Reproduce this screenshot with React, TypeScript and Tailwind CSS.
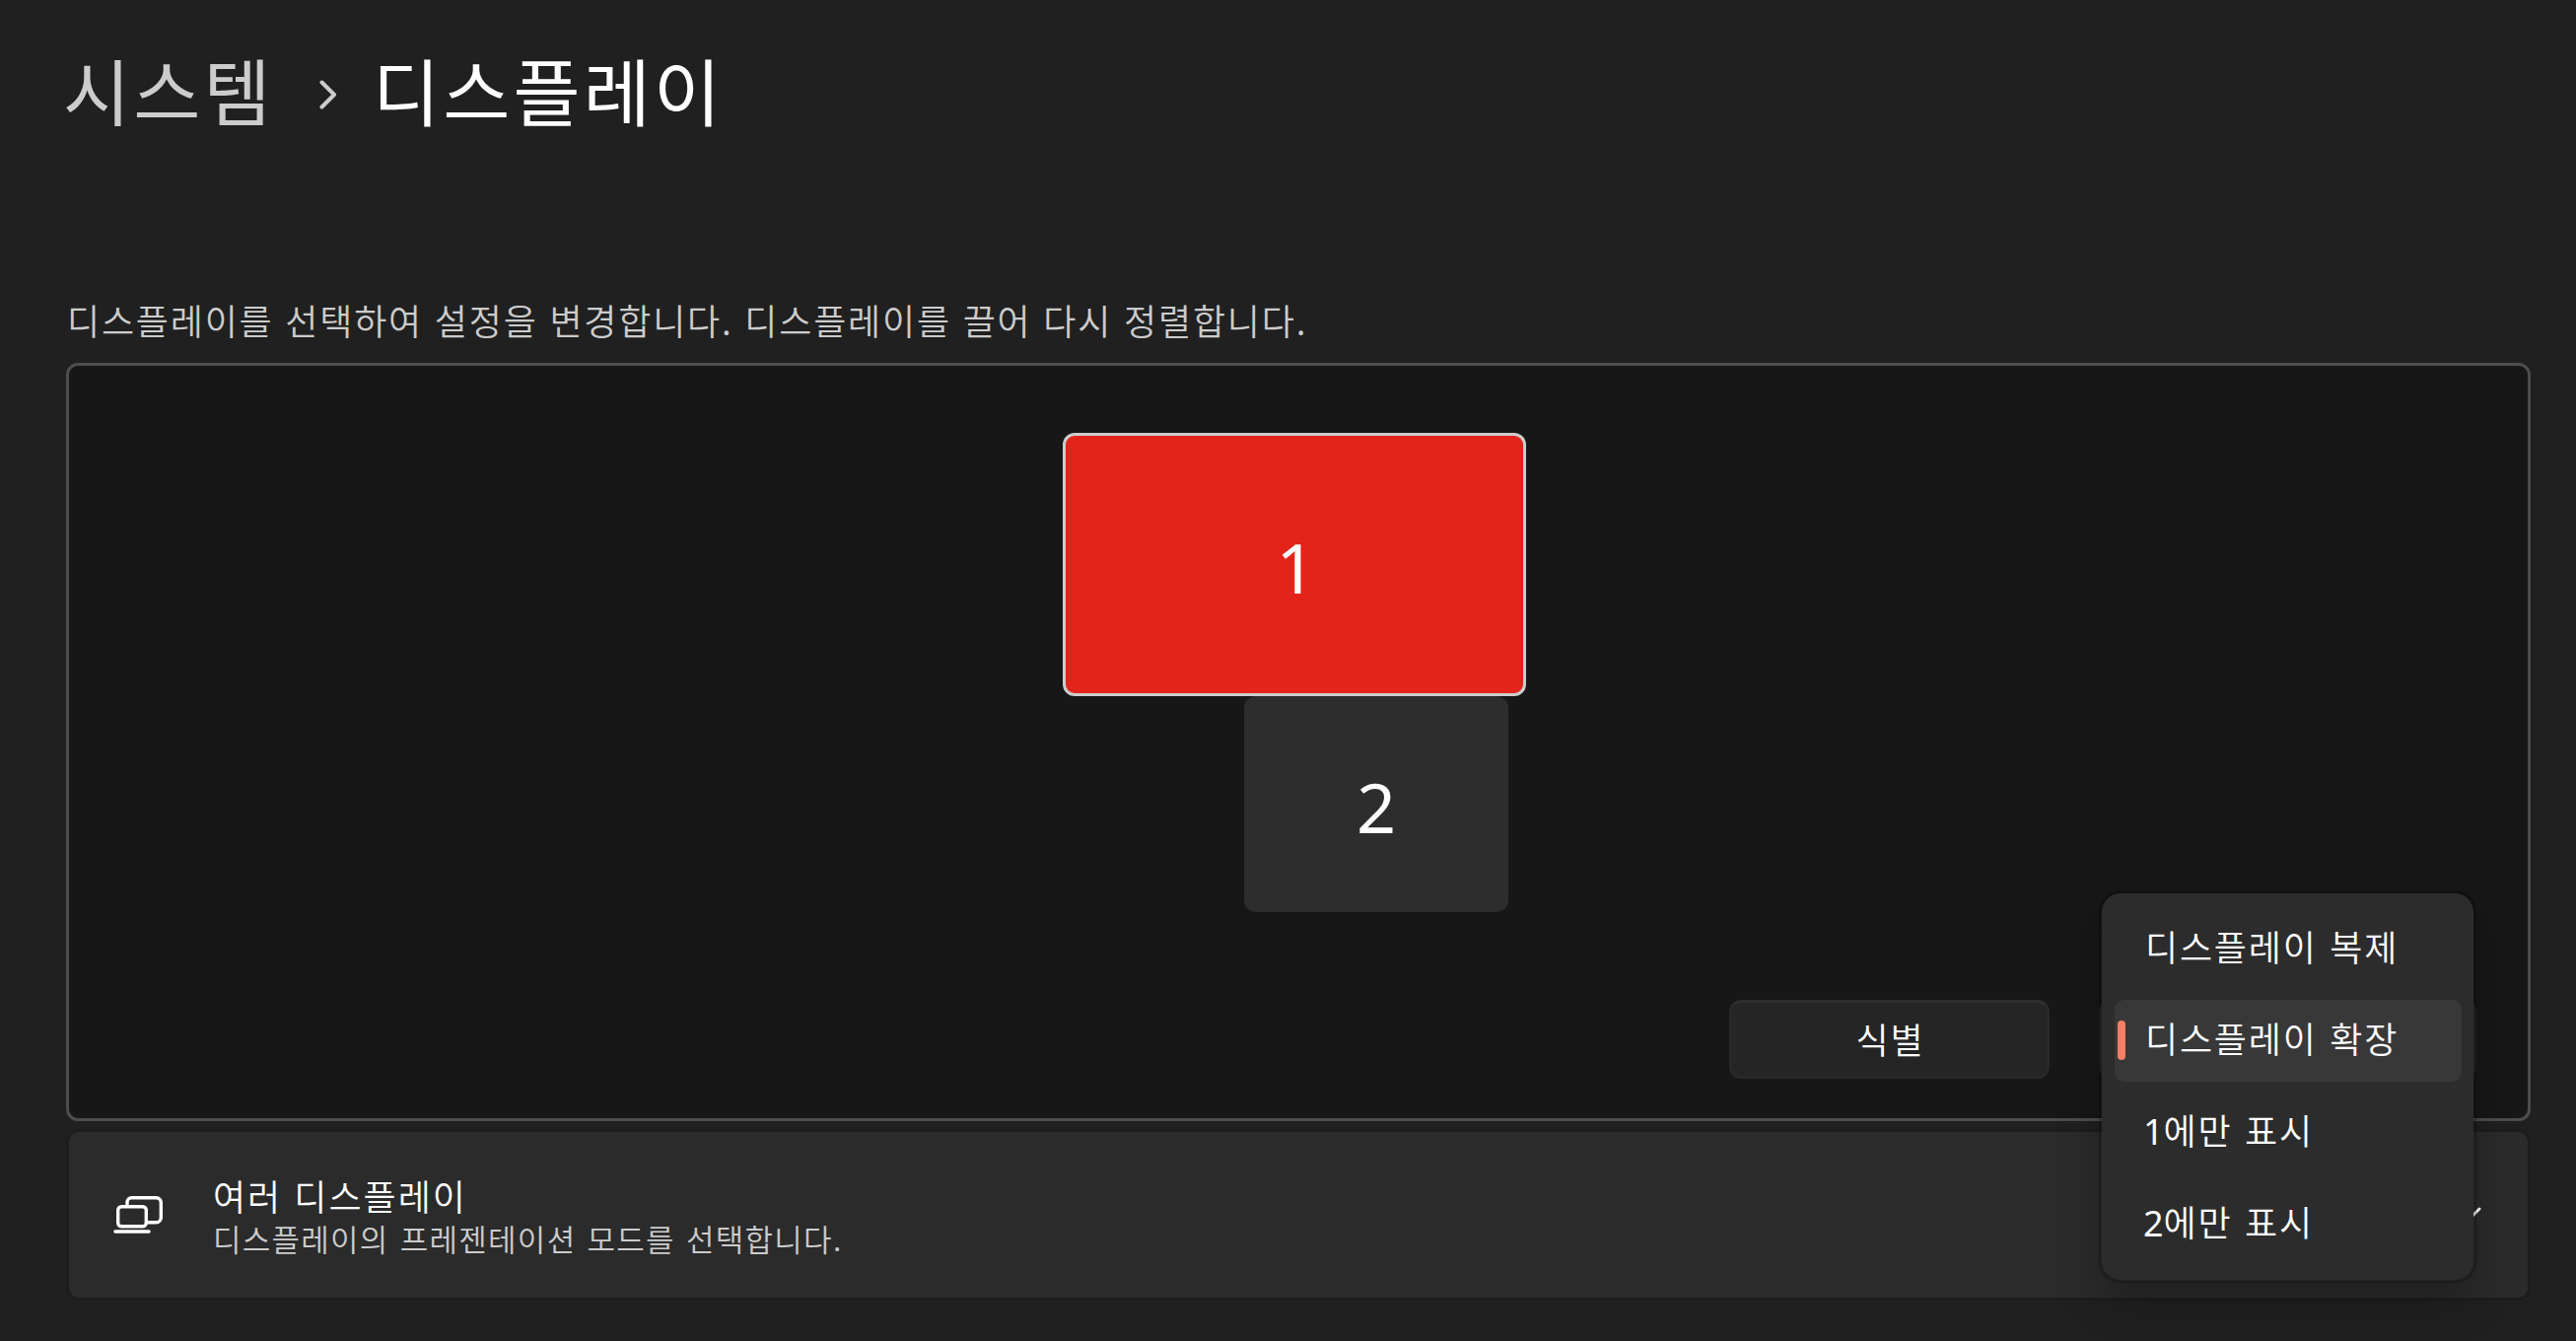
import React from "react";

const modes = ["디스플레이 복제", "디스플레이 확장", "1에만 표시", "2에만 표시"];
const selectedMode = 1;

function MultiDisplayIcon() {
  return (
    <svg width="50" height="38" viewBox="0 0 50 38" fill="none" stroke="#fff" strokeWidth="3.4" strokeLinecap="round">
      <rect x="4.7" y="10.7" width="28.6" height="20" rx="3.5" />
      <path d="M14 9.5V6a4.5 4.5 0 0 1 4.5-4.3h25A4.8 4.8 0 0 1 48.300 6.500v15.500a4.800 4.800 0 0 1-4.800 4.800H34.500" />
      <path d="M1.900 36h34.200" />
    </svg>
  );
}

export default function App() {
  return (
    <div className="relative flex h-[1360px] w-[2613px] flex-col overflow-hidden bg-[#202020] pr-[46px] pl-[67px] font-['Noto_Sans','Noto_Sans_CJK_KR',sans-serif] text-white">
      <header className="mt-[40px] flex h-[110px] items-center font-['Noto_Sans_CJK_KR',sans-serif] text-[74px] leading-[110px] font-normal tracking-[3.2px] whitespace-nowrap">
        <span className="-mt-[11px] -ml-[3px] w-[260px] text-[#cccccc]">시스템</span>
        <svg className="mt-[2px] mr-[36px]" width="18" height="30" viewBox="0 0 18 30" fill="none" stroke="#cccccc" strokeWidth="4" strokeLinecap="round" strokeLinejoin="round">
          <path d="M2.500 2.500L15 15L2.500 27.500" />
        </svg>
        <h1 className="-mt-[11px]">디스플레이</h1>
      </header>

      <p className="mt-[146px] h-[72px] pl-px font-['Noto_Sans_CJK_KR',sans-serif] text-[36px] leading-[56px] font-[350] tracking-[1.8px] whitespace-nowrap text-[#cccccc] [word-spacing:2px]">
        디스플레이를 선택하여 설정을 변경합니다. 디스플레이를 끌어 다시 정렬합니다.
      </p>

      <section className="relative flex h-[769px] shrink-0 flex-col justify-end rounded-[12px] border-[3px] border-[#4d4d4d] bg-[#171717]">
        <div className="absolute top-[68px] left-[1008px] z-10 flex h-[267px] w-[470px] items-center justify-center rounded-[12px] border-[3px] border-[#cccccc] bg-[#e3241b] pt-[6px] pl-[3px] text-[70px]">
          1
        </div>
        <div className="absolute top-[335px] left-[1192px] flex h-[219px] w-[268px] items-center justify-center rounded-[12px] bg-[#2d2d2d] pt-[6px] text-[70px]">
          2
        </div>
        <div className="mr-[52px] mb-[40px] flex justify-end gap-[50px]">
          <button className="h-[80px] w-[325px] rounded-[12px] border-[3px] border-[#292929] border-t-[#2e2e2e] bg-[#252525] pb-[3px] pl-[2px] font-['Noto_Sans_CJK_KR',sans-serif] text-[36px] font-[350] tracking-[1.8px]">식별</button>
          <button className="h-[80px] w-[383px] rounded-[12px] border-[3px] border-[#292929] bg-[#252525]" />
        </div>
      </section>

      <section className="mt-[8px] flex h-[174px] shrink-0 items-center rounded-[12px] border-[3px] border-[#1d1d1d] bg-[#2b2b2b] bg-clip-padding pl-[45px]">
        <MultiDisplayIcon />
        <div className="ml-[51px] flex-1 pt-[4px] font-['Noto_Sans_CJK_KR',sans-serif] font-[350] whitespace-nowrap">
          <h2 className="h-[44px] text-[36px] leading-[44px] font-[350] tracking-[2px] [word-spacing:2px]">여러 디스플레이</h2>
          <p className="h-[44px] text-[31px] leading-[44px] tracking-[1.25px] text-[#cccccc] [word-spacing:3px]">디스플레이의 프레젠테이션 모드를 선택합니다.</p>
        </div>
        <svg className="mt-[4px] mr-[47px]" width="34" height="20" viewBox="0 0 34 20" fill="none" stroke="#fff" strokeWidth="3" strokeLinecap="round" strokeLinejoin="round">
          <path d="M2 2L17 17L32 2" />
        </svg>
      </section>

      <ul className="absolute top-[903px] left-[2129px] z-20 flex w-[383px] flex-col gap-[10px] rounded-[22px] border-[3px] border-black/25 bg-[#2c2c2c] bg-clip-padding pr-[12px] pl-[13px] py-[15px] shadow-[0_20px_40px_rgba(0,0,0,0.26)]">
        {modes.map((mode, i) => (
          <li
            key={mode}
            className={
              i === selectedMode
                ? "flex h-[83px] items-center rounded-[10px] bg-[#383838] pl-[3px] text-[36px] font-[350] tracking-[1.8px] whitespace-nowrap [word-spacing:1.5px]"
                : "flex h-[83px] items-center pl-[3px] text-[36px] font-[350] tracking-[1.8px] whitespace-nowrap [word-spacing:1.5px]"
            }
          >
            <span className={i === selectedMode ? "-mt-px mr-[20px] h-[40px] w-[8px] rounded-full bg-[#f67f66]" : "mr-[20px] w-[8px]"} />
            <span className={i > 1 ? "-mt-px -ml-[2px]" : "-mt-px"}>
              {i > 1 ? <span className="font-normal tracking-normal">{mode[0]}</span> : mode[0]}
              {mode.slice(1)}
            </span>
          </li>
        ))}
      </ul>
    </div>
  );
}
